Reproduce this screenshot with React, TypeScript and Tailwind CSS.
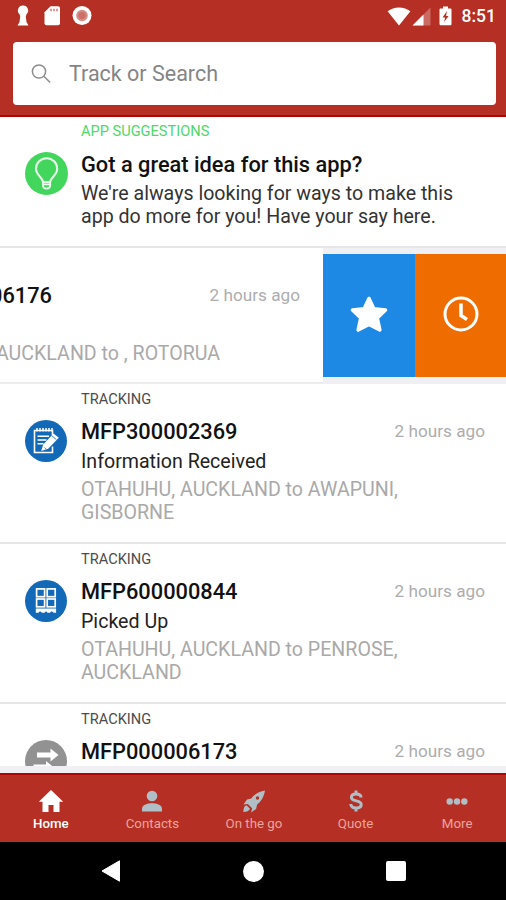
import type { ReactNode } from "react";

type Item = {
  category: string;
  title: string;
  time: string;
  status?: string;
  detail?: string[];
  icon: ReactNode;
};

function BulbIcon() {
  return (
    <svg width="43" height="43" viewBox="0 0 43 43" fill="none">
      <circle cx="21.5" cy="21.5" r="21.5" fill="#43d65c" />
      <path
        d="M18 30c0-4.200-7-6.800-7-13.200a10.600 10.600 0 0 1 21.200 0c0 6.400-7 9-7 13.200z"
        stroke="#e9fbec"
        strokeWidth="2.100"
        strokeLinejoin="round"
      />
      <path d="M18 30v3.6q0 3 3.6 3t3.600-3V30M18 32.300h7.200" stroke="#e9fbec" strokeWidth="1.8" />
    </svg>
  );
}

function NoteIcon() {
  return (
    <svg width="42" height="42" viewBox="0 0 42 42" fill="none">
      <circle cx="21" cy="21" r="21" fill="#1169b8" />
      <g stroke="#fff" strokeWidth="1.6">
        <path d="M27.500 15v-4.500H9.500V32.500h18v-6" />
        <path d="M12 8v3.500M15 8v3.500M18 8v3.500M21 8v3.500M24 8v3.500M27 8v3.500" strokeWidth="1.5" />
        <path d="M12.500 16.200h11.500M12.500 20h9M12.500 23.800h6" />
      </g>
      <path d="M28.500 13.500l5.300 4.300-10.600 11-7 2.200 2-6.500z" fill="#fff" />
      <path d="M19.500 27.500l1.800 1.700M26.800 15.800l4.600 3.800" stroke="#1169b8" strokeWidth=".8" />
    </svg>
  );
}

function PalletIcon() {
  return (
    <svg width="42" height="42" viewBox="0 0 42 42" fill="none">
      <circle cx="21" cy="21" r="21" fill="#1169b8" />
      <g stroke="#fff" strokeWidth="1.700">
        <rect x="11.600" y="8.900" width="8" height="7.800" />
        <rect x="22.200" y="8.900" width="8" height="7.800" />
        <rect x="11.600" y="19" width="8" height="7.800" />
        <rect x="22.200" y="19" width="8" height="7.800" />
      </g>
      <path d="M10.800 28.400h20.300v4.300h-2.500q-2-2.400-3.600 0h-2.500q-1.500-2.400-3 0H17q-2-2.400-3.600 0h-2.600z" fill="#fff" />
    </svg>
  );
}

function TransitIcon() {
  return (
    <svg width="42" height="42" viewBox="0 0 42 42" fill="none">
      <circle cx="21" cy="21" r="21" fill="#929292" />
      <path d="M12 12.600h13.500V8.500l8 6.500-8 6.500v-4.100H12z" fill="#fff" />
      <path d="M8.500 24.500H21V21l8 6.500-8 6.500v-4.100H8.500z" fill="#fff" />
    </svg>
  );
}

const items: Item[] = [
  {
    category: "TRACKING",
    title: "MFP300002369",
    time: "2 hours ago",
    status: "Information Received",
    detail: ["OTAHUHU, AUCKLAND to AWAPUNI,", "GISBORNE"],
    icon: <NoteIcon />,
  },
  {
    category: "TRACKING",
    title: "MFP600000844",
    time: "2 hours ago",
    status: "Picked Up",
    detail: ["OTAHUHU, AUCKLAND to PENROSE,", "AUCKLAND"],
    icon: <PalletIcon />,
  },
  {
    category: "TRACKING",
    title: "MFP000006173",
    time: "2 hours ago",
    icon: <TransitIcon />,
  },
];

function StatusBar() {
  return (
    <div className="h-8 flex items-center justify-between pl-[15px] pr-[10px]">
      <div className="flex items-center">
        <svg width="16" height="22" viewBox="0 0 16 22" fill="#fff">
          <path d="M8 .5a5 5 0 0 1 3.500 8.700l-.7 2.300.7 5.500 2 3.500H2.500l2-3.500.7-5.500-.7-2.300A5 5 0 0 1 8 .5z" />
        </svg>
        <svg className="ml-[12px]" width="18" height="22" viewBox="0 0 18 22">
          <path d="M7.500 1.200H15a2 2 0 0 1 2 2v15a2 2 0 0 1-2 2H3.500a2 2 0 0 1-2-2V7.200z" fill="#fff" />
          <path d="M8 3.700v2.500M11 3.700v2.500M14 3.700v2.500" stroke="#c9655c" strokeWidth="1.300" />
        </svg>
        <svg className="ml-[11px]" width="20" height="20" viewBox="0 0 20 20">
          <circle cx="10" cy="9.500" r="9.500" fill="#fff" />
          <circle cx="10" cy="9.500" r="5.800" fill="#d68c86" />
          <circle cx="10" cy="9.500" r="3.500" fill="#cb6f67" />
        </svg>
      </div>
      <div className="flex items-center">
        <svg width="24" height="19" viewBox="0 0 24 19" fill="#fff">
          <path d="M.6 4.300C7-.8 17-.8 23.400 4.300L12 18.500z" />
        </svg>
        <svg className="ml-px" width="19" height="19" viewBox="0 0 19 19">
          <path d="M18.500.5v18H.5z" fill="#cb6a62" />
          <path d="M11.500 7.500v11H.5z" fill="#fff" />
        </svg>
        <svg className="ml-[8px]" width="14" height="20" viewBox="0 0 14 20">
          <path d="M4 .5h5v2h2.500a1 1 0 0 1 1 1V18a1.200 1.200 0 0 1-1.200 1.200H1.700A1.200 1.200 0 0 1 .5 18V3.500a1 1 0 0 1 1-1H4z" fill="#fff" />
          <path d="M8 5l-4.500 6.500h2.700L5 16l4.600-6H7z" fill="#b52f24" />
        </svg>
        <span className="ml-[9px] text-[17.500px] leading-5 font-medium text-white">8:51</span>
      </div>
    </div>
  );
}

function Header() {
  return (
    <header className="h-[117px] shrink-0 bg-[#b52f24] border-b-2 border-[#b00505]">
      <StatusBar />
      <div className="mt-[10px] ml-[13px] mr-[10px] h-[63px] rounded bg-white flex items-center">
        <svg className="ml-[18px]" width="21" height="21" viewBox="0 0 21 21" fill="none" stroke="#8d8d8d" strokeWidth="1.500">
          <circle cx="8" cy="8.500" r="6.600" />
          <path d="M12.800 13.300l6.400 6.200" />
        </svg>
        <span className="ml-[17px] pt-px text-[21.500px] text-[#858585]">Track or Search</span>
      </div>
    </header>
  );
}

function Suggestion() {
  return (
    <div className="h-[131px] shrink-0 border-b-2 border-[#e6e6e6] bg-white flex">
      <div className="w-[81px] shrink-0 pl-[25px] pt-[35px]">
        <BulbIcon />
      </div>
      <div>
        <div className="mt-[4px] h-5 text-[14.600px] leading-5 text-[#4fd868]">APP SUGGESTIONS</div>
        <div className="mt-[11px] h-[26px] text-[21.800px] leading-[26px] font-medium text-[#111]">
          Got a great idea for this app?
        </div>
        <div className="mt-[4px] text-[19.600px] leading-[23px] text-[#333] whitespace-nowrap">
          We're always looking for ways to make this
          <br />
          app do more for you! Have your say here.
        </div>
      </div>
    </div>
  );
}

// Row dragged to the left, with its two actions showing
function SwipedRow() {
  return (
    <div className="h-[136px] shrink-0 flex bg-[#efeff4]">
      <div className="w-[323px] shrink-0 overflow-hidden bg-white border-b-2 border-[#ececec]">
        <div className="mt-[35px] h-[26px] flex justify-between items-center pr-[23px]">
          <span className="-ml-[10px] pt-px text-[21.800px] font-medium text-[#111]">06176</span>
          <span className="text-[17.200px] text-[#adadad]">2 hours ago</span>
        </div>
        <div className="mt-[33px] -ml-[4px] text-[19.600px] leading-[23px] text-[#a9a9a9]">AUCKLAND to , ROTORUA</div>
      </div>
      <div className="mt-[6px] w-[92px] h-[123px] pb-[4px] bg-[#1e88e5] flex items-center justify-center">
        <svg width="40" height="38" viewBox="0 0 40 38" fill="#fff" stroke="#fff" strokeWidth="3.600" strokeLinejoin="round">
          <path d="M20 3.500l4.800 10.200L36.500 15l-8.300 8 2.600 12L20 29.500 9.200 35l2.600-12-8.300-8 11.700-1.300z" />
        </svg>
      </div>
      <div className="mt-[6px] w-[91px] h-[123px] pb-[4px] bg-[#ef6c00] flex items-center justify-center">
        <svg width="36" height="36" viewBox="0 0 36 36" fill="none" stroke="#fff" strokeWidth="3">
          <circle cx="18" cy="18" r="16" />
          <path d="M18 7.500v12l6 4" strokeWidth="3.500" />
        </svg>
      </div>
    </div>
  );
}

function TrackingRow({ item }: { item: Item }) {
  return (
    <div className="h-[160px] shrink-0 border-b-2 border-[#e6e6e6] bg-white flex">
      <div className="w-[81px] shrink-0 pl-[25px] pt-[36px]">{item.icon}</div>
      <div className="flex-1 pr-[21px] whitespace-nowrap">
        <div className="mt-[5px] h-5 text-[14.600px] leading-5 text-[#4c4c4c]">{item.category}</div>
        <div className="mt-[10px] h-[26px] flex items-center justify-between">
          <span className="pt-px text-[21.800px] font-medium text-[#111]">{item.title}</span>
          <span className="text-[17.200px] text-[#adadad]">{item.time}</span>
        </div>
        <div className="mt-[4px] h-[26px] text-[19.600px] leading-[26px] text-[#222]">{item.status}</div>
        <div className="mt-[3px] text-[19.600px] leading-[23px] text-[#a9a9a9]">
          {item.detail?.map((line) => (
            <div key={line}>{line}</div>
          ))}
        </div>
      </div>
    </div>
  );
}

function Tab({ label, active, children }: { label: string; active?: boolean; children: ReactNode }) {
  return (
    <div className={active ? "flex flex-col items-center text-white font-medium" : "flex flex-col items-center text-[#eda49e]"}>
      {children}
      <span className="mt-[3px]">{label}</span>
    </div>
  );
}

function TabBar() {
  return (
    <nav className="h-[69px] shrink-0 pt-[14px] -mr-[2px] bg-[#b52f24] border-t-2 border-[#b00505] grid grid-cols-5 text-[13.300px] leading-4">
      <Tab label="Home" active>
        <svg width="26" height="24" viewBox="0 0 26 24" fill="#fff">
          <path d="M13 1L.8 12.800h3.700V23h6v-7h5v7h6V12.800h3.700z" />
        </svg>
      </Tab>
      <Tab label="Contacts">
        <svg width="22" height="24" viewBox="0 0 22 24" fill="#b0bec5">
          <circle cx="11" cy="7" r="5.300" />
          <path d="M1 22.500v-3c0-4 6.500-5.300 10-5.300s10 1.300 10 5.300v3z" />
        </svg>
      </Tab>
      <Tab label="On the go">
        <svg width="24" height="24" viewBox="0 0 24 24" fill="#b0bec5">
          <path d="M23 1.500c-6 1-11 4-13.800 8L5 10.500 1.500 15.500l4.300-.6 4.300 4.300-1 4.300 5-3.500 1-4.500c4-3 7-8 7.900-14z" />
          <path d="M4.500 16.200c-2.500 1-3 3.300-3.200 6.800 3.400-.3 5.700-.8 6.700-3.300z" />
          <circle cx="15.500" cy="9" r="1.700" fill="#b52f24" />
        </svg>
      </Tab>
      <Tab label="Quote">
        <svg width="16" height="24" viewBox="0 0 16 24" fill="none" stroke="#b0bec5" strokeWidth="3">
          <path d="M13 8.500c0-2.500-2-3.500-5-3.500s-4.600 1.300-4.600 3.400c0 4.600 9.800 2.300 9.800 7 0 2.300-2 3.600-5.200 3.600S2.800 17.500 2.800 15M8 1.500v3.500M8 19v3.500" />
        </svg>
      </Tab>
      <Tab label="More">
        <svg width="22" height="24" viewBox="0 0 22 24" fill="#b0bec5">
          <circle cx="3.700" cy="12.500" r="3.200" />
          <circle cx="11" cy="12.500" r="3.200" />
          <circle cx="18.300" cy="12.500" r="3.200" />
        </svg>
      </Tab>
    </nav>
  );
}

function SystemNav() {
  return (
    <div className="h-[58px] shrink-0 bg-black flex items-center justify-between pl-[101px] pr-[100px]">
      <svg width="20" height="22" viewBox="0 0 20 22" fill="#fff">
        <path d="M18.500.8v20.400L1 11z" stroke="#fff" strokeLinejoin="round" />
      </svg>
      <div className="size-[21px] rounded-full bg-white" />
      <div className="size-5 rounded-[2px] bg-white" />
    </div>
  );
}

export default function App() {
  return (
    <div className="w-full h-[900px] flex flex-col overflow-hidden bg-[#efeff4] font-[Roboto,sans-serif]">
      <Header />
      <main className="h-[649px] shrink-0 flex flex-col overflow-hidden">
        <Suggestion />
        <SwipedRow />
        {items.map((item) => (
          <TrackingRow key={item.title} item={item} />
        ))}
      </main>
      <div className="h-[7px] shrink-0" />
      <TabBar />
      <SystemNav />
    </div>
  );
}
